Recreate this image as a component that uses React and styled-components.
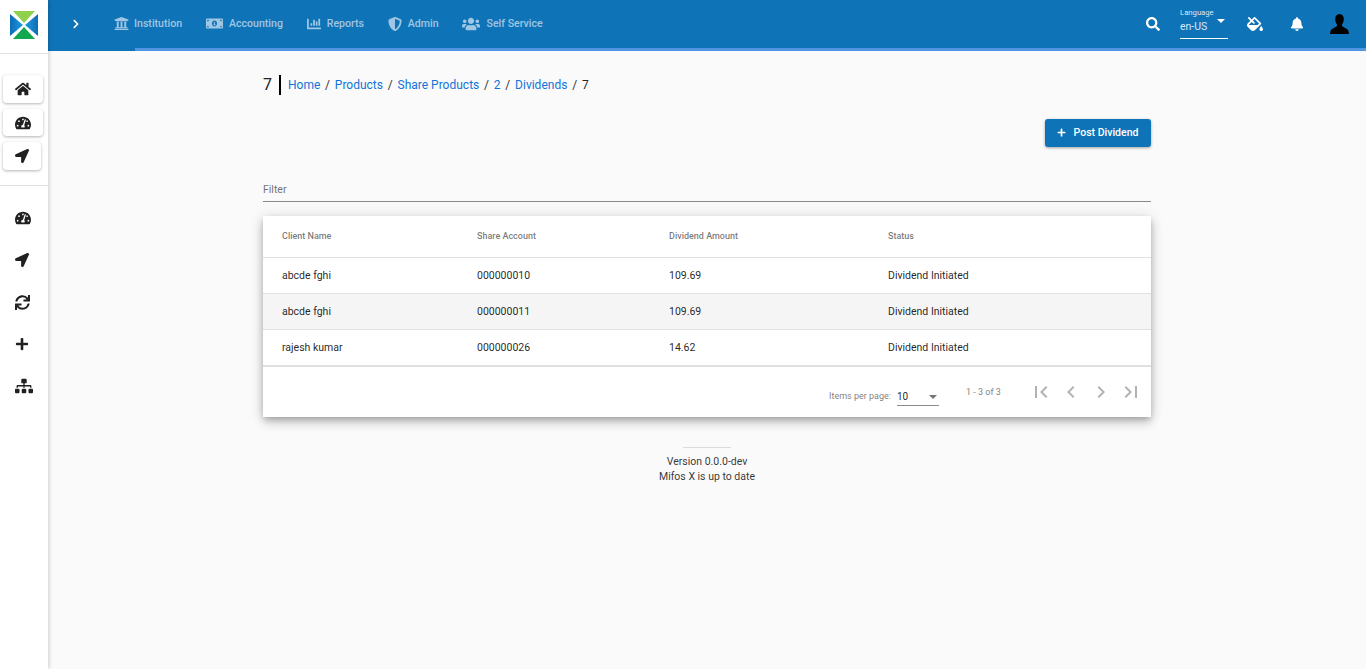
import React from 'react';
import styled, { createGlobalStyle } from 'styled-components';
import {
  FaHome,
  FaTachometerAlt,
  FaLocationArrow,
  FaSync,
  FaPlus,
  FaSitemap,
  FaUniversity,
  FaMoneyBillAlt,
  FaChartBar,
  FaShieldAlt,
  FaUsers,
  FaSearch,
  FaFillDrip,
  FaBell,
  FaChevronRight,
} from 'react-icons/fa';

const GlobalStyle = createGlobalStyle`
  html, body {
    margin: 0;
    padding: 0;
    height: 100%;
    background: #fafafa;
    font-family: Roboto, "Liberation Sans", sans-serif;
    color: rgba(0, 0, 0, 0.87);
  }
`;

const Shell = styled.div`
  display: flex;
  height: 669px;
  overflow: hidden;
`;

const Sidebar = styled.aside`
  flex: 0 0 48px;
  width: 48px;
  background: #fff;
  box-shadow: 1px 0 4px rgba(0, 0, 0, 0.18);
  z-index: 2;
`;

const LogoBox = styled.div`
  height: 54px;
  box-sizing: border-box;
  border-bottom: 1px solid #e0e0e0;
  display: flex;
  justify-content: center;
  padding-top: 11px;
`;

const QuickLinks = styled.div`
  height: 132px;
  box-sizing: border-box;
  border-bottom: 1px solid #e0e0e0;
  padding: 21px 0 0 3px;
  display: flex;
  flex-direction: column;
  gap: 6px;
`;

const QuickButton = styled.div`
  width: ${(p) => p.$width}px;
  height: ${(p) => p.$height || 28}px;
  background: #fff;
  border-radius: 4px;
  display: flex;
  align-items: center;
  justify-content: center;
  font-size: ${(p) => p.$icon || 16}px;
  color: #212121;
  box-shadow: 0 1px 3px rgba(0, 0, 0, 0.3);
`;

const SideIcons = styled.div`
  display: flex;
  flex-direction: column;
  padding-top: 11px;
`;

const SideIcon = styled.div`
  height: 42px;
  padding-left: 15px;
  display: flex;
  align-items: center;
  font-size: ${(p) => p.$size}px;
  color: #212121;
`;

const Main = styled.div`
  flex: 1;
  min-width: 0;
  display: flex;
  flex-direction: column;
`;

const Toolbar = styled.header`
  position: relative;
  height: 51px;
  flex: 0 0 51px;
  box-sizing: border-box;
  padding-bottom: 4px;
  background: #0f73b8;
  display: flex;
  align-items: center;
  color: #fff;

  &::after {
    content: '';
    position: absolute;
    left: 87px;
    right: 0;
    bottom: 0;
    height: 3px;
    background: #5096e3;
  }
`;

const Toggle = styled.div`
  width: 54px;
  padding-left: 23px;
  box-sizing: border-box;
  display: flex;
  font-size: 10px;
`;

const Nav = styled.nav`
  display: flex;
  align-items: center;
  margin-left: 12px;
  gap: 23.8px;
`;

const NavItem = styled.div`
  display: flex;
  align-items: center;
  gap: ${(p) => p.$gap || 6}px;
  font-size: 10.6px;
  font-weight: 500;
  color: rgba(255, 255, 255, 0.6);
  svg {
    font-size: ${(p) => p.$icon || 14}px;
    color: rgba(255, 255, 255, 0.6);
  }
`;

const ToolActions = styled.div`
  margin-left: auto;
  padding-right: 17px;
  display: flex;
  align-items: center;
  align-self: stretch;
`;

const ActionIcon = styled.div`
  display: flex;
  font-size: ${(p) => p.$size || 14}px;
  color: #fff;
  margin-left: ${(p) => p.$left || 0}px;
`;

const LanguageField = styled.div`
  width: 48px;
  height: 33px;
  margin-left: 20px;
  margin-top: 6px;
  align-self: flex-start;
  box-sizing: border-box;
  border-bottom: 1px solid #fff;
  position: relative;
  color: rgba(255, 255, 255, 0.85);
`;

const LanguageLabel = styled.div`
  font-size: 7.7px;
  line-height: 9px;
  margin-top: 2px;
`;

const LanguageValue = styled.div`
  font-size: 10.5px;
  line-height: 14px;
  margin-top: 3px;
`;

const LanguageCaret = styled.span`
  position: absolute;
  top: 13px;
  right: 3px;
  width: 0;
  height: 0;
  border-top: 4px solid #fff;
  border-left: 4px solid transparent;
  border-right: 4px solid transparent;
`;

const Content = styled.main`
  width: 888px;
  margin-left: 215px;
`;

const Crumbs = styled.div`
  display: flex;
  align-items: center;
  height: 20px;
  margin-top: 24px;
  font-size: 12px;
`;

const CrumbTitle = styled.span`
  font-size: 16px;
  color: #212121;
  padding-right: 7px;
  margin-right: 7px;
  border-right: 2px solid #000;
  line-height: 20px;
`;

const CrumbLink = styled.a`
  color: #1074d9;
  text-decoration: none;
`;

const CrumbSep = styled.span`
  color: #333;
  margin: 0 4.8px;
`;

const ActionsRow = styled.div`
  display: flex;
  justify-content: flex-end;
  margin-top: 24px;
`;

const PostButton = styled.button`
  height: 28px;
  width: 106px;
  border: 0;
  border-radius: 3px;
  padding: 0 1px 1px 0;
  background: #0f73b8;
  color: #fff;
  font-family: inherit;
  font-size: 10.5px;
  font-weight: 500;
  display: flex;
  align-items: center;
  justify-content: center;
  gap: 8px;
  box-shadow: 0 1px 3px rgba(0, 0, 0, 0.35);
`;

const FilterField = styled.div`
  margin-top: 27px;
  height: 28px;
  box-sizing: border-box;
  border-bottom: 1px solid #8a8a8a;
  font-size: 10.5px;
  color: #757575;
  padding-top: 9px;
`;

const Card = styled.section`
  margin-top: 14px;
  background: #fff;
  box-shadow: 0 3px 6px -1px rgba(0, 0, 0, 0.22), 0 6px 10px 0 rgba(0, 0, 0, 0.14), 0 1px 14px 0 rgba(0, 0, 0, 0.12);
`;

const Row = styled.div`
  display: grid;
  grid-template-columns: 195px 192px 219px 1fr;
  align-items: center;
  box-sizing: border-box;
  height: ${(p) => p.$height}px;
  padding-left: 19px;
  padding-bottom: ${(p) => (p.$head ? 2 : 0)}px;
  border-bottom: 1px solid #e0e0e0;
  background: ${(p) => (p.$shaded ? '#f5f5f5' : '#fff')};
  font-size: ${(p) => (p.$head ? 9 : 10.5)}px;
  font-weight: ${(p) => (p.$head ? 500 : 400)};
  color: ${(p) => (p.$head ? 'rgba(0,0,0,0.54)' : 'rgba(0,0,0,0.87)')};
`;

const Paginator = styled.div`
  height: 51px;
  border-top: 1px solid #e0e0e0;
  box-sizing: border-box;
  display: flex;
  align-items: center;
  font-size: 9px;
  color: rgba(0, 0, 0, 0.54);
`;

const PageSize = styled.div`
  display: flex;
  align-items: center;
  margin-left: 566px;
  margin-top: 8px;
`;

const PageSelect = styled.div`
  width: 42px;
  height: 19px;
  margin: 0 0 0 6px;
  padding-top: 4px;
  box-sizing: border-box;
  border-bottom: 1px solid #8a8a8a;
  position: relative;
  font-size: 10px;
  color: rgba(0, 0, 0, 0.87);
`;

const PageCaret = styled.span`
  position: absolute;
  top: 8px;
  right: 2px;
  width: 0;
  height: 0;
  border-top: 4px solid #757575;
  border-left: 4px solid transparent;
  border-right: 4px solid transparent;
`;

const Range = styled.div`
  margin-left: 27px;
`;

const PageButtons = styled.div`
  display: flex;
  margin-left: 25px;
`;

const PageButton = styled.div`
  width: 30px;
  height: 30px;
  display: flex;
  align-items: center;
  justify-content: center;
`;

const Version = styled.footer`
  text-align: center;
  margin-top: 30px;
  font-size: 10.5px;
  line-height: 15px;
  color: rgba(0, 0, 0, 0.8);
`;

const VersionRule = styled.hr`
  width: 48px;
  border: 0;
  border-top: 1px solid #dcdcdc;
  margin: 0 auto 6px;
`;

const Logo = () => (
  <svg width="28" height="28" viewBox="0 0 28 28">
    <defs>
      <linearGradient id="logoLeft" x1="0" x2="1" y1="0" y2="0">
        <stop offset="0" stopColor="#0d6cb5" />
        <stop offset="1" stopColor="#1f9be0" />
      </linearGradient>
      <linearGradient id="logoRight" x1="0" x2="1" y1="0" y2="0">
        <stop offset="0" stopColor="#1f9be0" />
        <stop offset="1" stopColor="#0d6cb5" />
      </linearGradient>
    </defs>
    <polygon points="0,3 13,14 0,25" fill="url(#logoLeft)" />
    <polygon points="28,3 15,14 28,25" fill="url(#logoRight)" />
    <polygon points="3,0 25,0 14,12" fill="#8fd14f" />
    <polygon points="3,28 25,28 14,16" fill="#12a84f" />
  </svg>
);

const UserSilhouette = () => (
  <svg width="19" height="20" viewBox="0 0 19 20" fill="#000">
    <path d="M9.5 0C6.6 0 5.2 2.2 5.2 5c0 2.2.7 4 1.7 5.2.3.4.3 1.4-.1 1.9-.7.8-2.6 1.8-4.4 2.7C.9 15.6.3 17 0 20h19c-.3-3-.9-4.4-2.4-5.2-1.8-.9-3.7-1.9-4.4-2.7-.4-.5-.4-1.5-.1-1.9 1-1.2 1.7-3 1.7-5.2 0-2.8-1.4-5-4.3-5z" />
  </svg>
);

const PagerIcon = ({ d }) => (
  <svg width="24" height="24" viewBox="0 0 24 24" fill="rgba(0,0,0,0.3)">
    <path d={d} />
  </svg>
);

const navItems = [
  { label: 'Institution', Icon: FaUniversity, icon: 15, gap: 5 },
  { label: 'Accounting', Icon: FaMoneyBillAlt, icon: 17, gap: 6 },
  { label: 'Reports', Icon: FaChartBar, icon: 14, gap: 6 },
  { label: 'Admin', Icon: FaShieldAlt, icon: 14, gap: 6 },
  { label: 'Self Service', Icon: FaUsers, icon: 18, gap: 6 },
];

const rows = [
  { name: 'abcde fghi', account: '000000010', amount: '109.69' },
  { name: 'abcde fghi', account: '000000011', amount: '109.69', shaded: true },
  { name: 'rajesh kumar', account: '000000026', amount: '14.62' },
];

const crumbs = ['Home', 'Products', 'Share Products', '2', 'Dividends'];

const App = () => (
  <Shell>
    <GlobalStyle />
    <Sidebar>
      <LogoBox>
        <Logo />
      </LogoBox>
      <QuickLinks>
        <QuickButton $width={40}><FaHome /></QuickButton>
        <QuickButton $width={40} $height={27}><FaTachometerAlt /></QuickButton>
        <QuickButton $width={38} $icon={14}><FaLocationArrow /></QuickButton>
      </QuickLinks>
      <SideIcons>
        <SideIcon $size={16}><FaTachometerAlt /></SideIcon>
        <SideIcon $size={14}><FaLocationArrow /></SideIcon>
        <SideIcon $size={15}><FaSync /></SideIcon>
        <SideIcon $size={14}><FaPlus /></SideIcon>
        <SideIcon $size={18}><FaSitemap /></SideIcon>
      </SideIcons>
    </Sidebar>
    <Main>
      <Toolbar>
        <Toggle><FaChevronRight /></Toggle>
        <Nav>
          {navItems.map(({ label, Icon, icon, gap }) => (
            <NavItem key={label} $icon={icon} $gap={gap}>
              <Icon />
              {label}
            </NavItem>
          ))}
        </Nav>
        <ToolActions>
          <ActionIcon><FaSearch /></ActionIcon>
          <LanguageField>
            <LanguageLabel>Language</LanguageLabel>
            <LanguageValue>en-US</LanguageValue>
            <LanguageCaret />
          </LanguageField>
          <ActionIcon $left={19} $size={16}><FaFillDrip /></ActionIcon>
          <ActionIcon $left={27} $size={14}><FaBell /></ActionIcon>
          <ActionIcon $left={26} $size={20}><UserSilhouette /></ActionIcon>
        </ToolActions>
      </Toolbar>
      <Content>
        <Crumbs>
          <CrumbTitle>7</CrumbTitle>
          {crumbs.map((c) => (
            <React.Fragment key={c}>
              <CrumbLink>{c}</CrumbLink>
              <CrumbSep>/</CrumbSep>
            </React.Fragment>
          ))}
          <span>7</span>
        </Crumbs>
        <ActionsRow>
          <PostButton><FaPlus size={9} />Post Dividend</PostButton>
        </ActionsRow>
        <FilterField>Filter</FilterField>
        <Card>
          <Row $head $height={42}>
            <span>Client Name</span>
            <span>Share Account</span>
            <span>Dividend Amount</span>
            <span>Status</span>
          </Row>
          {rows.map((r) => (
            <Row key={r.account} $height={36} $shaded={r.shaded}>
              <span>{r.name}</span>
              <span>{r.account}</span>
              <span>{r.amount}</span>
              <span>Dividend Initiated</span>
            </Row>
          ))}
          <Paginator>
            <PageSize>
              Items per page:
              <PageSelect>
                10
                <PageCaret />
              </PageSelect>
            </PageSize>
            <Range>1 - 3 of 3</Range>
            <PageButtons>
              <PageButton><PagerIcon d="M18.41 16.59 13.82 12l4.59-4.59L17 6l-6 6 6 6zM6 6h2v12H6z" /></PageButton>
              <PageButton><PagerIcon d="M15.41 7.41 14 6l-6 6 6 6 1.41-1.41L10.83 12z" /></PageButton>
              <PageButton><PagerIcon d="M10 6 8.59 7.41 13.17 12l-4.58 4.59L10 18l6-6z" /></PageButton>
              <PageButton><PagerIcon d="M5.59 7.41 10.18 12l-4.59 4.59L7 18l6-6-6-6zM16 6h2v12h-2z" /></PageButton>
            </PageButtons>
          </Paginator>
        </Card>
        <Version>
          <VersionRule />
          <div>Version 0.0.0-dev</div>
          <div>Mifos X is up to date</div>
        </Version>
      </Content>
    </Main>
  </Shell>
);

export default App;
